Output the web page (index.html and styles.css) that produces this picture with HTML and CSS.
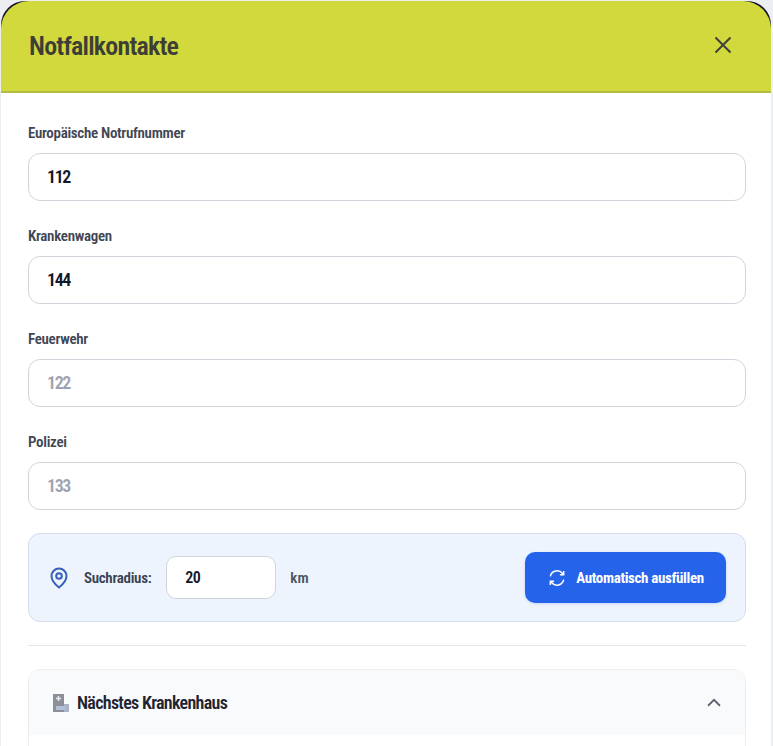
FILE: index.html
```html
<!DOCTYPE html>
<html lang="de">
<head>
<meta charset="utf-8">
<title>Notfallkontakte</title>
<link rel="stylesheet" href="styles.css">
</head>
<body>
<div class="modal">
  <div class="modalHeader">
    <h2 class="modalTitle">Notfallkontakte</h2>
    <svg class="closeIcon" viewBox="0 0 24 24" width="24" height="24"><path d="M4.500 4.500L19.500 19.500M19.500 4.500L4.500 19.500"/></svg>
  </div>
  <div class="modalBody">
    <div class="field">
      <label class="fieldLabel">Europäische Notrufnummer</label>
      <div class="fieldInput">112</div>
    </div>
    <div class="field">
      <label class="fieldLabel">Krankenwagen</label>
      <div class="fieldInput">144</div>
    </div>
    <div class="field">
      <label class="fieldLabel">Feuerwehr</label>
      <div class="fieldInput placeholder">122</div>
    </div>
    <div class="field">
      <label class="fieldLabel">Polizei</label>
      <div class="fieldInput placeholder">133</div>
    </div>

    <div class="radiusPanel">
      <svg class="pinIcon" viewBox="0 0 24 24" width="24" height="24"><path d="M12 21.500C12 21.500 4.500 15.500 4.500 10A7.500 7.500 0 0 1 19.500 10C19.500 15.500 12 21.500 12 21.500Z"/><circle cx="12" cy="10" r="2.800"/></svg>
      <span class="radiusLabel">Suchradius:</span>
      <div class="radiusInput">20</div>
      <span class="radiusUnit">km</span>
      <div class="autoButton">
        <svg class="syncIcon" viewBox="0 0 24 24" width="20" height="20"><path d="M4 10A8.200 8.200 0 0 1 18.500 6.500L20 8M20 3.500V8H15.500M20 14A8.200 8.200 0 0 1 5.500 17.500L4 16M4 20.500V16H8.500"/></svg>
        <span>Automatisch ausfüllen</span>
      </div>
    </div>

    <hr class="divider">

    <div class="hospitalCard">
      <div class="hospitalHead">
        <svg class="hospitalIcon" viewBox="0 0 16 18" width="16" height="18"><rect x="0" y="0" width="11" height="18" fill="#8b8f99"/><rect x="11" y="10" width="5" height="8" fill="#a9b4c9"/><path d="M5.500 2V7M3 4.500H8" stroke="#e6e8ee" stroke-width="1.600"/><rect x="3" y="12" width="9" height="4" fill="#b4c0d8"/></svg>
        <span class="hospitalTitle">Nächstes Krankenhaus</span>
        <svg class="chevronIcon" viewBox="0 0 24 24" width="22" height="22"><path d="M5.500 15L12 8.500L18.500 15"/></svg>
      </div>
    </div>
  </div>
</div>
</body>
</html>
```

FILE: styles.css
```css
* {box-sizing: border-box;}

html, body {height: 100%;}

body {
	margin: 0;
	overflow: hidden;
	background: #eceef2;
	font-family: "Liberation Sans Narrow", "Roboto Condensed", "Liberation Sans", sans-serif;
	color: #111827;
}

.modal {
	margin: 1px 2px 0 1px;
	height: 745px;
	background: #14142a;
	border-radius: 24px 24px 0 0;
	overflow: hidden;
}

.modalHeader {
	display: flex;
	align-items: center;
	justify-content: space-between;
	height: 92px;
	padding: 0 36px 2px 28px;
	background: #d2d93c;
	border-bottom: 2px solid #b5bb45;
	border-radius: 28px 28px 0 0;
}

.modalTitle {
	margin: 2px 0 0;
	font-size: 26px;
	font-weight: 600;
	letter-spacing: -0.8px;
	color: #3d3f37;
}

.closeIcon path {
	fill: none;
	stroke: #3f413a;
	stroke-width: 2;
}

.modalBody {
	padding: 31px 25px 0 27px;
	background: #fff;
	height: 100%;
}

.field + .field {margin-top: 26px;}

.fieldLabel {
	display: block;
	height: 29px;
	line-height: 19px;
	font-size: 15px;
	font-weight: 600;
	letter-spacing: -0.3px;
	color: #414654;
}

.fieldInput {
	height: 48px;
	line-height: 46px;
	padding: 0 18px;
	background: #fff;
	border: 1px solid #d1d5db;
	border-radius: 12px;
	font-size: 18px;
	font-weight: 600;
	letter-spacing: -1.4px;
	color: #111827;
}

.fieldInput.placeholder {color: #9ca3af;}

.radiusPanel {
	display: flex;
	align-items: center;
	height: 89px;
	margin-top: 23px;
	padding: 0 19px 0 18px;
	background: #eef4fd;
	border: 1px solid #d3ddeb;
	border-radius: 12px;
}

.pinIcon path, .pinIcon circle {
	fill: none;
	stroke: #3560bb;
	stroke-width: 2;
}

.radiusLabel {
	margin-left: 13px;
	font-size: 15px;
	font-weight: 600;
	letter-spacing: -0.3px;
	color: #374151;
}

.radiusInput {
	width: 110px;
	height: 43px;
	line-height: 41px;
	margin-left: 15px;
	padding: 0 18px;
	background: #fff;
	border: 1px solid #d1d5db;
	border-radius: 10px;
	font-size: 16px;
	font-weight: 600;
	letter-spacing: -0.6px;
}

.radiusUnit {
	margin-left: 14px;
	font-size: 15px;
	font-weight: 600;
	color: #4b5563;
}

.autoButton {
	display: flex;
	align-items: center;
	justify-content: center;
	gap: 9px;
	width: 201px;
	height: 51px;
	margin-left: auto;
	background: #2563eb;
	border-radius: 10px;
	box-shadow: 0 1px 3px rgba(37, 99, 235, 0.2);
	font-size: 15px;
	font-weight: 700;
	letter-spacing: -0.35px;
	color: #fff;
}

.syncIcon path {
	fill: none;
	stroke: #fff;
	stroke-width: 1.800;
}

.divider {
	height: 1px;
	margin: 23px 0;
	background: #e5e7eb;
	border: 0;
}

.hospitalCard {
	height: 200px;
	border: 1px solid #eceef1;
	border-radius: 12px;
	overflow: hidden;
}

.hospitalHead {
	display: flex;
	align-items: center;
	height: 65px;
	padding: 0 20px 0 24px;
	background: #f9fafc;
}

.hospitalTitle {
	margin-left: 8px;
	font-size: 18px;
	font-weight: 600;
	letter-spacing: -0.7px;
	color: #1f2430;
}

.chevronIcon {margin-left: auto;}

.chevronIcon path {
	fill: none;
	stroke: #5b6270;
	stroke-width: 2;
}
```
